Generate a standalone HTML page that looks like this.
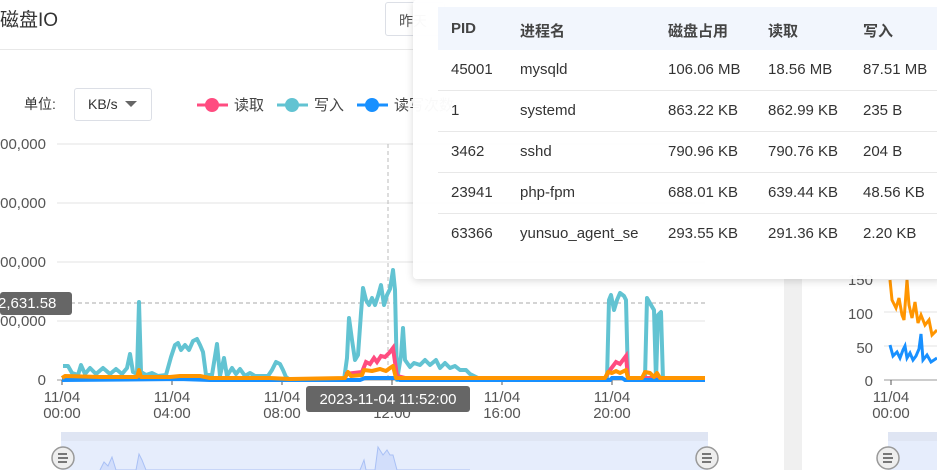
<!DOCTYPE html>
<html><head><meta charset="utf-8"><style>
*{margin:0;padding:0;box-sizing:border-box}
body{width:937px;height:470px;overflow:hidden;background:#f0f0f0;font-family:"Liberation Sans","Noto Sans CJK SC",sans-serif;position:relative;color:#333}
.abs{position:absolute;white-space:nowrap}
.t{font-size:14px;color:#333}
</style></head><body>
<div class="abs" style="left:0;top:0;width:784px;height:470px;background:#fff"></div>
<div class="abs" style="left:802px;top:0;width:135px;height:470px;background:#fff"></div>
<div class="abs" style="left:0;top:5px;font-size:19px;color:#333">磁盘IO</div>
<div class="abs" style="left:0;top:49px;width:784px;height:1px;background:#e8e8e8"></div>
<div class="abs" style="left:385px;top:2px;width:60px;height:34px;border:1px solid #dcdfe6;border-radius:3px;font-size:14px;color:#555;padding:8px 0 0 13px">昨天</div>
<div class="abs t" style="left:24px;top:94px">单位:</div>
<div class="abs" style="left:74px;top:88px;width:78px;height:33px;border:1px solid #dcdfe6;border-radius:3px;font-size:14px;color:#333;padding:7px 0 0 13px">KB/s <span style="display:inline-block;width:0;height:0;border-left:6px solid transparent;border-right:6px solid transparent;border-top:6px solid #666;margin-left:4px;vertical-align:2px"></span></div>
<svg class="abs" style="left:0;top:0" width="937" height="470">
<g font-family="Liberation Sans,Noto Sans CJK SC,sans-serif" font-size="15" fill="#444">
<line x1="197" y1="105" x2="228" y2="105" stroke="#ff4c80" stroke-width="3"/><circle cx="212" cy="105" r="7" fill="#ff4c80"/><text x="234" y="110">读取</text>
<line x1="277" y1="105" x2="308" y2="105" stroke="#62c3d2" stroke-width="3"/><circle cx="292" cy="105" r="7" fill="#62c3d2"/><text x="314" y="110">写入</text>
<line x1="357" y1="105" x2="388" y2="105" stroke="#1890ff" stroke-width="3"/><circle cx="372" cy="105" r="7" fill="#1890ff"/><text x="394" y="110">读写次数</text>
</g>
<g stroke="#e3e3e3" stroke-width="1"><line x1="57" y1="144" x2="705" y2="144"/><line x1="57" y1="203" x2="705" y2="203"/><line x1="57" y1="262" x2="705" y2="262"/><line x1="57" y1="321" x2="705" y2="321"/></g>
<line x1="57" y1="380" x2="705" y2="380" stroke="#999"/>
<g font-size="15" fill="#555" text-anchor="end" font-family="Liberation Sans,sans-serif"><text x="46" y="149">00,000</text><text x="46" y="208">00,000</text><text x="46" y="267">00,000</text><text x="46" y="326">00,000</text><text x="46" y="385">0</text></g>
<line x1="388" y1="144" x2="388" y2="380" stroke="#bbb" stroke-dasharray="4,3"/>
<line x1="57" y1="303" x2="705" y2="303" stroke="#aaa" stroke-dasharray="4,3"/>
<g stroke="#555"><line x1="62" y1="380" x2="62" y2="385"/><line x1="172" y1="380" x2="172" y2="385"/><line x1="282" y1="380" x2="282" y2="385"/><line x1="392" y1="380" x2="392" y2="385"/><line x1="502" y1="380" x2="502" y2="385"/><line x1="612" y1="380" x2="612" y2="385"/></g>
<g font-size="15" fill="#555" text-anchor="middle" font-family="Liberation Sans,sans-serif">
<text x="62" y="402">11/04</text><text x="62" y="418">00:00</text>
<text x="172" y="402">11/04</text><text x="172" y="418">04:00</text>
<text x="282" y="402">11/04</text><text x="282" y="418">08:00</text>
<text x="392" y="418">12:00</text>
<text x="502" y="402">11/04</text><text x="502" y="418">16:00</text>
<text x="612" y="402">11/04</text><text x="612" y="418">20:00</text>
</g>
<polyline fill="none" stroke="#62c3d2" stroke-width="4" stroke-linejoin="round" points="63,366 68,366 72,373 78,375 81,365 85,374 90,368 96,374 103,368 110,374 116,369 122,374 127,368 130,354 133,372 137,374 139,302 141,372 146,375 152,373 158,376 166,375 171,357 175,345 178,343 181,350 185,345 189,350 193,341 197,339 200,345 203,352 206,375 212,375 217,344 220,376 224,358 227,376 232,368 236,374 240,369 245,376 250,373 255,376 262,376 268,376 272,370 276,362 280,364 283,370 286,377 290,380 300,380 330,380 344,380 347,358 349,318 352,340 355,360 358,355 361,313 363,288 366,300 369,305 372,298 375,305 378,296 381,285 384,305 387,295 390,289 393,270 395,290 397,380 401,356 403,328 405,360 410,367 414,363 420,365 425,360 430,365 436,360 440,368 445,363 450,368 455,366 460,370 466,370 470,374 478,378 490,379 530,379 560,379 600,379 607,379 609,300 611,295 614,310 617,300 620,293 624,296 626,300 628,380 630,378 645,378 647,298 651,305 654,310 656,380 658,315 661,312 663,380 670,379 705,379"/>
<polyline fill="none" stroke="#ff4c80" stroke-width="4" points="345,374 362,372 366,362 370,364 374,358 377,362 381,356 385,357 390,352 393,348 397,376 405,378 605,378 610,370 616,362 620,364 626,356 628,378 705,378"/>
<polyline fill="none" stroke="#1890ff" stroke-width="4" points="62,380 180,379 210,380 360,380 365,378 395,378 400,380 610,380 612,378 622,378 625,380 705,380"/>
<polyline fill="none" stroke="#ff9500" stroke-width="4" stroke-linejoin="round" points="62,378 65,376 100,377 137,377 139,370 141,377 170,377 180,376 200,376 210,378 270,378 290,379 345,378 348,372 351,376 362,375 364,370 372,371 380,369 386,371 390,368 393,366 396,378 400,378 605,378 608,372 612,373 616,371 620,373 626,370 628,378 642,378 645,372 650,373 654,377 657,373 660,378 705,378"/>
<rect x="0" y="292" width="72" height="23" rx="3" fill="#666"/>
<text x="-2" y="308" font-size="15" fill="#fff" font-family="Liberation Sans,sans-serif">2,631.58</text>
<rect x="306" y="386" width="164" height="26" rx="3" fill="#666"/>
<text x="388" y="404" font-size="15" fill="#fff" text-anchor="middle" font-family="Liberation Sans,sans-serif">2023-11-04 11:52:00</text>
<rect x="61" y="432" width="647" height="9" fill="#dfe5f3"/>
<rect x="61" y="441" width="647" height="29" fill="#e6edfc"/>
<polyline fill="#d2defb" stroke="#a9c0f5" stroke-width="1" points="100,470 104,462 108,466 112,457 116,470 136,470 139,454 142,460 146,470 360,470 364,460 366,470 375,470 378,447 383,455 387,450 390,455 393,455 397,470 470,470"/>
<g><circle cx="63" cy="458" r="11" fill="#eee" stroke="#999" stroke-width="1.5"/><path d="M58,454h9M58,458h10M58,462h9" stroke="#777" stroke-width="2"/></g>
<g><circle cx="707" cy="458" r="11" fill="#eee" stroke="#999" stroke-width="1.5"/><path d="M702,454h9M702,458h10M702,462h9" stroke="#777" stroke-width="2"/></g>
<g stroke="#e3e3e3"><line x1="884" y1="312" x2="937" y2="312"/><line x1="884" y1="346" x2="937" y2="346"/></g>
<line x1="884" y1="380" x2="937" y2="380" stroke="#999"/>
<line x1="891" y1="380" x2="891" y2="385" stroke="#555"/>
<g font-size="15" fill="#555" text-anchor="end" font-family="Liberation Sans,sans-serif"><text x="873" y="285">150</text><text x="873" y="319">100</text><text x="873" y="353">50</text><text x="873" y="386">0</text></g>
<g font-size="15" fill="#555" text-anchor="middle" font-family="Liberation Sans,sans-serif"><text x="891" y="402">11/04</text><text x="891" y="418">00:00</text></g>
<polyline fill="none" stroke="#ff9500" stroke-width="3" points="890,280 892,300 896,308 899,298 902,315 904,320 907,280 909,305 912,318 915,302 918,323 921,315 925,325 929,320 932,335 937,330"/>
<polyline fill="none" stroke="#1890ff" stroke-width="3" points="890,345 893,356 897,352 900,358 903,350 905,346 907,358 910,353 913,360 916,356 919,349 921,334 923,360 927,355 931,362 937,358"/>
<rect x="888" y="432" width="49" height="9" fill="#dfe5f3"/><rect x="888" y="441" width="49" height="29" fill="#e6edfc"/>
<g><circle cx="888" cy="458" r="11" fill="#eee" stroke="#999" stroke-width="1.5"/><path d="M883,454h9M883,458h10M883,462h9" stroke="#777" stroke-width="2"/></g>
</svg>
<div class="abs" style="left:413px;top:0;width:530px;height:279px;background:rgba(255,255,255,0.97);border-radius:4px;box-shadow:0 2px 8px rgba(0,0,0,0.15)"></div>
<div class="abs" style="left:438px;top:7px;width:499px;height:43px;background:#f2f6fd"></div>
<div class="abs" style="left:413px;top:0;font-size:15px;color:#444;font-weight:bold">
<div class="abs" style="top:20px;left:38px">PID</div>
<div class="abs" style="top:20px;left:107px">进程名</div>
<div class="abs" style="top:20px;left:255px">磁盘占用</div>
<div class="abs" style="top:20px;left:355px">读取</div>
<div class="abs" style="top:20px;left:450px">写入</div>
</div>
<div class="abs" style="left:438px;top:90px;width:499px;height:1px;background:#e8e8e8"></div>
<div class="abs" style="left:438px;top:131px;width:499px;height:1px;background:#e8e8e8"></div>
<div class="abs" style="left:438px;top:172px;width:499px;height:1px;background:#e8e8e8"></div>
<div class="abs" style="left:438px;top:213px;width:499px;height:1px;background:#e8e8e8"></div>
<div class="abs" style="left:413px;top:0;font-size:15px;color:#333;font-family:'Liberation Sans',sans-serif">
<div class="abs" style="top:61px;left:38px">45001</div><div class="abs" style="top:61px;left:107px">mysqld</div><div class="abs" style="top:61px;left:255px">106.06 MB</div><div class="abs" style="top:61px;left:355px">18.56 MB</div><div class="abs" style="top:61px;left:450px">87.51 MB</div>
<div class="abs" style="top:102px;left:38px">1</div><div class="abs" style="top:102px;left:107px">systemd</div><div class="abs" style="top:102px;left:255px">863.22 KB</div><div class="abs" style="top:102px;left:355px">862.99 KB</div><div class="abs" style="top:102px;left:450px">235 B</div>
<div class="abs" style="top:143px;left:38px">3462</div><div class="abs" style="top:143px;left:107px">sshd</div><div class="abs" style="top:143px;left:255px">790.96 KB</div><div class="abs" style="top:143px;left:355px">790.76 KB</div><div class="abs" style="top:143px;left:450px">204 B</div>
<div class="abs" style="top:184px;left:38px">23941</div><div class="abs" style="top:184px;left:107px">php-fpm</div><div class="abs" style="top:184px;left:255px">688.01 KB</div><div class="abs" style="top:184px;left:355px">639.44 KB</div><div class="abs" style="top:184px;left:450px">48.56 KB</div>
<div class="abs" style="top:225px;left:38px">63366</div><div class="abs" style="top:225px;left:107px">yunsuo_agent_se</div><div class="abs" style="top:225px;left:255px">293.55 KB</div><div class="abs" style="top:225px;left:355px">291.36 KB</div><div class="abs" style="top:225px;left:450px">2.20 KB</div>
</div>
</body></html>
